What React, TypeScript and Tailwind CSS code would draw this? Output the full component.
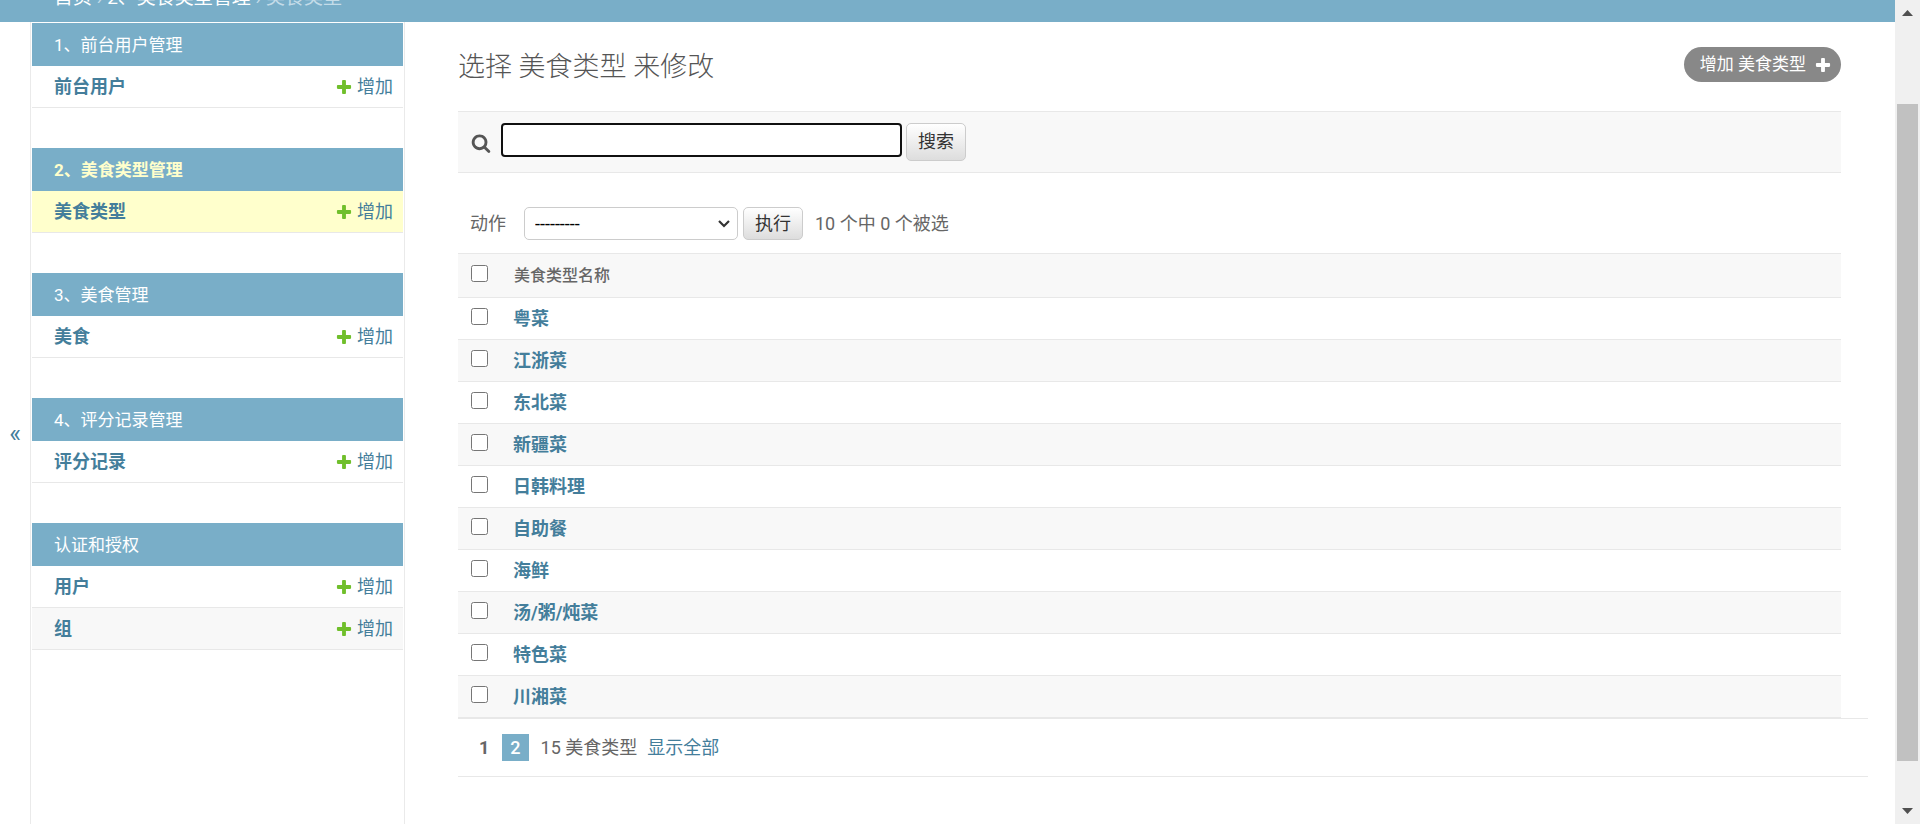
import { useState } from "react";

interface Model {
  name: string;
  current?: boolean;
}

interface AppSection {
  title: string;
  current?: boolean;
  models: Model[];
}

const sections: AppSection[] = [
  { title: "1、前台用户管理", models: [{ name: "前台用户" }] },
  {
    title: "2、美食类型管理",
    current: true,
    models: [{ name: "美食类型", current: true }],
  },
  { title: "3、美食管理", models: [{ name: "美食" }] },
  { title: "4、评分记录管理", models: [{ name: "评分记录" }] },
  { title: "认证和授权", models: [{ name: "用户" }, { name: "组" }] },
];

const foodTypes = [
  "粤菜",
  "江浙菜",
  "东北菜",
  "新疆菜",
  "日韩料理",
  "自助餐",
  "海鲜",
  "汤/粥/炖菜",
  "特色菜",
  "川湘菜",
];

function PlusIcon({ className }: { className: string }) {
  return (
    <svg
      viewBox="0 0 1792 1792"
      className={`size-[18px] shrink-0 ${className}`}
      fill="currentColor"
      aria-hidden="true"
    >
      <path d="M1600 796v192q0 40-28 68t-68 28h-416v416q0 40-28 68t-68 28h-192q-40 0-68-28t-28-68v-416h-416q-40 0-68-28t-28-68v-192q0-40 28-68t68-28h416v-416q0-40 28-68t68-28h192q40 0 68 28t28 68v416h416q40 0 68 28t28 68z" />
    </svg>
  );
}

function SearchIcon() {
  return (
    <svg
      viewBox="0 0 1792 1792"
      className="size-5 text-[#555]"
      fill="currentColor"
      aria-hidden="true"
    >
      <path d="M1216 832q0-185-131.5-316.5t-316.5-131.5-316.5 131.5-131.5 316.5 131.5 316.5 316.5 131.5 316.5-131.5 131.5-316.5zm512 832q0 52-38 90t-90 38q-54 0-90-38l-343-342q-179 124-399 124-143 0-273.5-55.5t-225-150-150-225-55.5-273.5 55.5-273.5 150-225 225-150 273.5-55.5 273.5 55.5 225 150 150 225 55.5 273.5q0 220-124 399l343 343q37 37 37 90z" />
    </svg>
  );
}

function Sidebar() {
  return (
    <nav className="w-[375px] shrink-0 border-x border-[#eaeaea] px-px pt-px">
      {sections.map((section) => (
        <table
          key={section.title}
          className="mb-10 w-full border-separate border-spacing-0"
        >
          <caption
            className={`h-[43px] bg-[#79aec8] px-[22px] text-left text-[17px] leading-[45px] ${
              section.current ? "font-bold text-[#ffc]" : "text-white"
            }`}
          >
            <a href="#">{section.title}</a>
          </caption>
          <tbody>
            {section.models.map((model, i) => (
              <tr
                key={model.name}
                className={`h-[42px] text-lg leading-6 text-[#447e9b] ${
                  model.current ? "bg-[#ffc]" : i % 2 ? "bg-[#f8f8f8]" : "bg-white"
                }`}
              >
                <th
                  scope="row"
                  className="border-b border-[#e8e8e8] pl-[22px] text-left font-bold"
                >
                  <a href="#">{model.name}</a>
                </th>
                <td className="border-b border-[#e8e8e8] pr-[10px]">
                  <a href="#" className="flex items-center justify-end gap-1">
                    <PlusIcon className="text-[#70bf2b]" />
                    增加
                  </a>
                </td>
              </tr>
            ))}
          </tbody>
        </table>
      ))}
    </nav>
  );
}

function ResultTable() {
  const [selected, setSelected] = useState<string[]>([]);

  const toggle = (name: string) =>
    setSelected((prev) =>
      prev.includes(name) ? prev.filter((n) => n !== name) : [...prev, name]
    );

  return (
    <>
      <form
        className="flex h-[33px] items-center text-lg leading-6"
        onSubmit={(e) => e.preventDefault()}
      >
        <label htmlFor="action" className="ml-3 mr-[18px]">
          动作
        </label>
        <div className="relative">
          <select
            id="action"
            className="h-[33px] w-[214px] appearance-none rounded-[5px] border border-[#ccc] bg-white px-[10px] text-lg leading-6 text-black"
          >
            <option>---------</option>
            <option>删除所选的 美食类型</option>
          </select>
          <svg
            viewBox="0 0 12 8"
            className="pointer-events-none absolute top-[13px] right-2 h-2 w-3"
            fill="none"
            stroke="#333"
            strokeWidth="2.2"
            aria-hidden="true"
          >
            <path d="M1 1l5 5 5-5" />
          </svg>
        </div>
        <button
          type="submit"
          className="ml-[5px] h-[33px] rounded-[5px] border border-[#ccc] bg-linear-to-b from-white to-[#ddd] px-[11px] text-[#333]"
        >
          执行
        </button>
        <span className="ml-3">
          10 个中 {selected.length} 个被选
        </span>
      </form>

      <table className="mt-[13px] w-full border-separate border-spacing-0">
        <thead>
          <tr className="h-[45px] bg-[#f8f8f8]">
            <th className="w-[55px] border-y border-[#e8e8e8] pt-[11px] pl-[13px] text-left align-top">
              <input
                type="checkbox"
                aria-label="全选"
                className="block size-[17px]"
                checked={selected.length === foodTypes.length}
                onChange={(e) => setSelected(e.target.checked ? foodTypes : [])}
              />
            </th>
            <th className="border-y border-[#e8e8e8] pl-px text-left text-base font-medium">
              <a href="#">美食类型名称</a>
            </th>
          </tr>
        </thead>
        <tbody>
          {foodTypes.map((name) => (
            <tr key={name} className="h-[42px] even:bg-[#f8f8f8]">
              <td className="border-b border-[#e8e8e8] pt-[10px] pl-[13px] align-top">
                <input
                  type="checkbox"
                  aria-label={name}
                  className="block size-[17px]"
                  checked={selected.includes(name)}
                  onChange={() => toggle(name)}
                />
              </td>
              <th
                scope="row"
                className="border-b border-[#e8e8e8] text-left text-lg leading-6 font-bold text-[#447e9b]"
              >
                <a href="#">{name}</a>
              </th>
            </tr>
          ))}
        </tbody>
      </table>
    </>
  );
}

function Scrollbar() {
  return (
    <div
      className="flex w-[25px] shrink-0 flex-col items-center bg-[#f0f0f0]"
      aria-hidden="true"
    >
      <svg viewBox="0 0 25 25" className="size-[25px]" fill="#505050">
        <path d="M7 16l5.5-6 5.5 6z" />
      </svg>
      <div className="flex-79" />
      <div className="w-[21px] flex-657 bg-[#c1c1c1]" />
      <div className="flex-38" />
      <svg viewBox="0 0 25 25" className="size-[25px]" fill="#505050">
        <path d="M7 9l5.5 6 5.5-6z" />
      </svg>
    </div>
  );
}

export default function App() {
  return (
    <div className="flex h-screen overflow-hidden bg-white font-[Roboto,'Noto_Sans_CJK_SC',sans-serif] text-[#666]">
      <div className="flex min-w-0 flex-1 flex-col">
        <div className="flex h-[22px] shrink-0 items-end overflow-hidden bg-[#79aec8] px-[54px] pb-3 text-[19px] leading-6 text-[#c4dce8]">
          <p>
            <a href="#" className="text-white">
              首页
            </a>{" "}
            ›{" "}
            <a href="#" className="text-white">
              2、美食类型管理
            </a>{" "}
            › 美食类型
          </p>
        </div>

        <div className="flex min-h-0 flex-1">
          <button
            type="button"
            aria-label="切换导航"
            className="flex w-[30px] shrink-0 items-center justify-center pt-5 text-[25px] leading-none text-[#447e9b]"
          >
            «
          </button>
          <Sidebar />

          <main className="min-w-0 flex-1 pt-[25px] pr-[27px] pl-[53px]">
            <div className="mr-[27px]">
              <div className="mb-[29px] flex h-[35px] items-start justify-between">
                <h1 className="text-[27px] leading-10 font-light text-[#555]">
                  选择 美食类型 来修改
                </h1>
                <a
                  href="#"
                  className="flex h-[35px] items-center gap-2 rounded-full bg-[#888] pr-[9px] pl-4 text-[17px] text-white"
                >
                  增加 美食类型
                  <PlusIcon className="text-white" />
                </a>
              </div>

              <form
                role="search"
                className="mb-[34px] flex h-[62px] items-start border-y border-[#e8e8e8] bg-[#f8f8f8] pt-[11px] pl-[13px]"
                onSubmit={(e) => e.preventDefault()}
              >
                <label htmlFor="searchbar" aria-label="搜索" className="mt-[10px] mr-[10px]">
                  <SearchIcon />
                </label>
                <input
                  id="searchbar"
                  type="text"
                  className="h-[34px] w-[401px] rounded-[4px] border-2 border-[#101010] bg-white px-2 text-lg text-[#333] outline-none"
                />
                <button
                  type="submit"
                  className="ml-1 h-[38px] rounded-[5px] border border-[#ccc] bg-linear-to-b from-white to-[#ddd] px-[11px] text-lg leading-6 text-[#333]"
                >
                  搜索
                </button>
              </form>

              <ResultTable />
            </div>

            <div className="flex h-[59px] items-center border-y border-[#e8e8e8] pl-[21px] text-lg leading-6">
              <span className="font-bold">1</span>
              <a
                href="#"
                className="ml-[13px] bg-[#79aec8] px-2 leading-[27px] font-medium text-white"
              >
                2
              </a>
              <span className="ml-3">15 美食类型</span>
              <a href="#" className="ml-[10px] text-[#447e9b]">
                显示全部
              </a>
            </div>
          </main>
        </div>
      </div>
      <Scrollbar />
    </div>
  );
}
